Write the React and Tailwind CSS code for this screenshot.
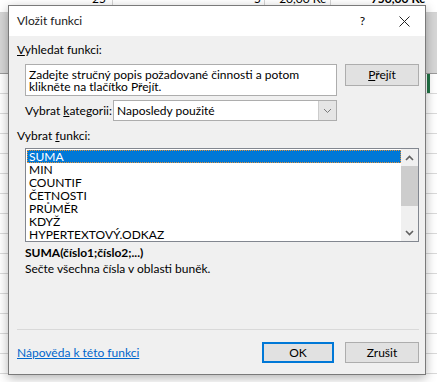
import React from "react";

const items = ["SUMA", "MIN", "COUNTIF", "ČETNOSTI", "PRŮMĚR", "KDYŽ", "HYPERTEXTOVÝ.ODKAZ"];

function Sheet() {
  const rows = Array.from({ length: 15 });
  return (
    <div className="w-[437px] h-[382px] bg-white overflow-hidden flex flex-col">
      {/* top row, mostly hidden behind the dialog */}
      <div className="h-[13px] flex text-[12px] leading-[12px] text-black border-b border-[#d4d4d4]">
        <div className="w-[113px] border-r border-[#d4d4d4] flex justify-end pr-[6px] -mt-[7px]">25</div>
        <div className="w-[152px] border-r border-[#d4d4d4] flex justify-end pr-[3px] -mt-[7px]">5</div>
        <div className="w-[66px] border-r border-[#d4d4d4] flex justify-end pr-[4px] -mt-[7px]">20,00 Kč</div>
        <div className="flex-1 flex justify-end pr-[12px] -mt-[7px] font-bold">750,00 Kč</div>
      </div>
      <div className="h-[61px] bg-[#d6d6d6] border-b border-[#9a9a9a] shrink-0" />
      <div className="flex-1 flex flex-col">
        {rows.map((_, i) => (
          <div key={i} className="h-[20px] shrink-0 border-b border-[#dadada] flex justify-end">
            {i === 0 && <div className="w-[3px] h-[19px] bg-[#217346] mr-[7px]" />}
          </div>
        ))}
      </div>
    </div>
  );
}

function Btn({ children, primary, className = "" }) {
  return (
    <div
      className={`h-[21px] flex items-center justify-center bg-[#e1e1e1] ${
        primary ? "border-2 border-[#0078d7]" : "border border-[#adadad]"
      } ${className}`}
    >
      {children}
    </div>
  );
}

function Chevron({ up, light }) {
  return (
    <svg width="9" height="6" viewBox="0 0 9 6">
      <polyline
        points={up ? "1,5 4.5,1.5 8,5" : "1,1 4.5,4.5 8,1"}
        fill="none"
        stroke={light ? "#7a7a7a" : "#606060"}
        strokeWidth={light ? "1" : "1.6"}
      />
    </svg>
  );
}

function Dialog() {
  return (
    <div className="absolute left-[8px] top-[5px] w-[418px] h-[370px] bg-[#f0f0f0] border border-[#7a7a7a] shadow-[0_3px_10px_rgba(0,0,0,0.3)] flex flex-col text-[12px] leading-[16px] text-black font-['Lato',sans-serif]">
      {/* title bar */}
      <div className="h-[30px] bg-white flex items-center shrink-0">
        <span className="ml-[8px] text-[12px] text-[#1a1a1a]">Vložit funkci</span>
        <span className="ml-auto mr-[34px] text-[12px]">?</span>
        <svg width="11" height="11" viewBox="0 0 11 11" className="mr-[15px]">
          <path d="M0.5 0.5 L10.5 10.5 M10.5 0.5 L0.5 10.5" stroke="#222" strokeWidth="1" />
        </svg>
      </div>

      <div className="flex-1 flex flex-col pl-[8px] pr-[6px] pt-[6px]">
        <div className="h-[16px]">
          <u>V</u>yhledat funkci:
        </div>

        <div className="flex mt-[6px] items-start">
          <div className="ml-[8px] w-[312px] h-[32px] bg-white border border-[#adadad] px-[3px] leading-[12px] pt-[4px]">
            Zadejte stručný popis požadované činnosti a potom klikněte na tlačítko Přejít.
          </div>
          <Btn className="ml-auto w-[74px] h-[22px]">
            <span>
              <u>P</u>řejít
            </span>
          </Btn>
        </div>

        <div className="flex items-center mt-[4px] ml-[8px]">
          <span className="w-[88px] whitespace-nowrap">
            Vybrat <u>k</u>ategorii:
          </span>
          <div className="w-[224px] h-[21px] bg-white border border-[#adadad] flex items-center">
            <span className="pl-[3px] flex-1">Naposledy použité</span>
            <div className="w-[18px] h-full bg-[#e5e5e5] border-l border-[#cccccc] flex items-center justify-center">
              <Chevron light />
            </div>
          </div>
        </div>

        <div className="mt-[7px] h-[16px]">
          Vybrat <u>f</u>unkci:
        </div>

        <div className="mt-[4px] ml-[8px] h-[94px] bg-white border border-[#828790] flex">
          <div className="flex-1 flex flex-col pt-[1px] pl-[1px] leading-[13px]">
            {items.map((it, i) => (
              <div
                key={it}
                className={`h-[13px] pl-[2px] shrink-0 ${
                  i === 0 ? "bg-[#0078d7] text-white outline outline-1 outline-dotted outline-[#e0913a] -outline-offset-1" : ""
                }`}
              >
                {it}
              </div>
            ))}
          </div>
          <div className="w-[17px] bg-[#f0f0f0] flex flex-col">
            <div className="h-[17px] flex items-center justify-center">
              <Chevron up />
            </div>
            <div className="h-[40px] bg-[#cdcdcd]" />
            <div className="flex-1" />
            <div className="h-[17px] flex items-center justify-center">
              <Chevron />
            </div>
          </div>
        </div>

        <div className="mt-[3px] ml-[8px] font-bold h-[16px]">SUMA(číslo1;číslo2;...)</div>
        <div className="ml-[8px] h-[16px]">Sečte všechna čísla v oblasti buněk.</div>

        <div className="mt-[52px] h-px bg-[#d9d9d9]" />

        <div className="mt-[12px] flex items-center">
          <span className="text-[#0066cc] underline">Nápověda k této funkci</span>
          <Btn primary className="ml-auto w-[72px]">
            OK
          </Btn>
          <Btn className="ml-[11px] w-[74px]">Zrušit</Btn>
        </div>
      </div>
    </div>
  );
}

export default function App() {
  return (
    <div className="relative w-[437px] h-[382px] overflow-hidden font-['Lato',sans-serif]">
      <Sheet />
      <Dialog />
    </div>
  );
}
